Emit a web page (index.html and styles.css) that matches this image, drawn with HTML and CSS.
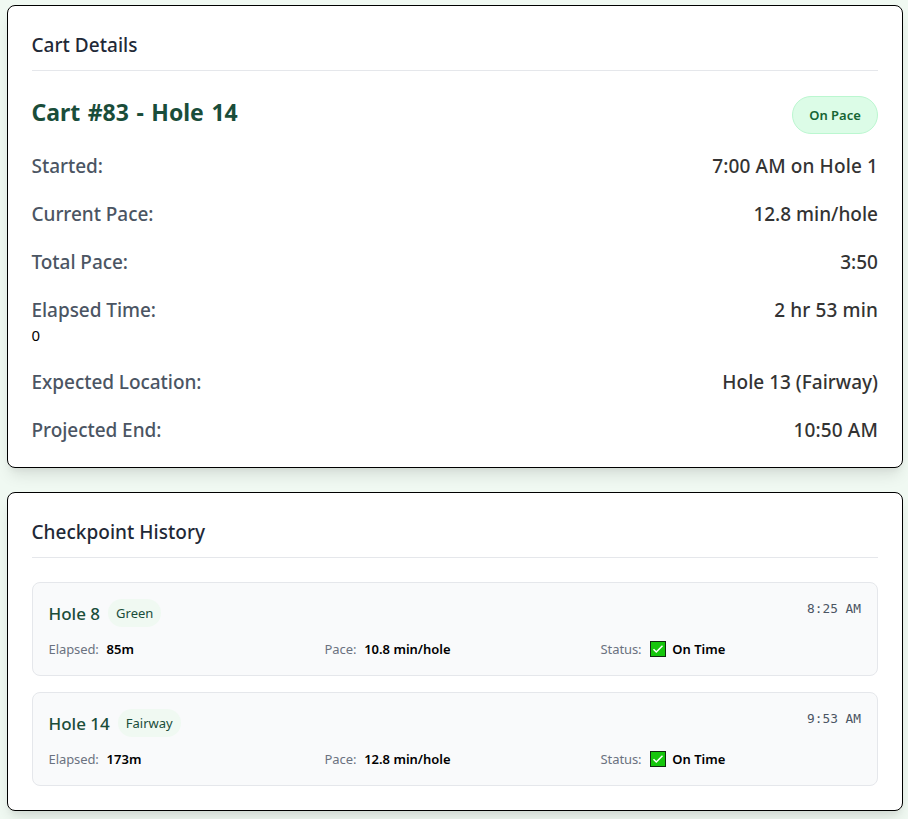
FILE: index.html
```html
<!DOCTYPE html>
<html lang="en">
<head>
<meta charset="utf-8">
<title>Cart Details</title>
<link rel="stylesheet" href="styles.css">
</head>
<body>
<main class="page">
  <section class="card card-details">
    <h2 class="card-title">Cart Details</h2>
    <div class="cart-head">
      <h3 class="cart-name">Cart #83 - Hole 14</h3>
      <span class="badge">On Pace</span>
    </div>
    <div class="details">
      <div class="row"><span class="label">Started:</span><span class="value wide">7:00 AM on Hole 1</span></div>
      <div class="row"><span class="label">Current Pace:</span><span class="value">12.8 min/hole</span></div>
      <div class="row"><span class="label">Total Pace:</span><span class="value">3:50</span></div>
      <div>
        <div class="row"><span class="label">Elapsed Time:</span><span class="value wide">2 hr 53 min</span></div>
        <div class="extra">0</div>
      </div>
      <div class="row"><span class="label">Expected Location:</span><span class="value">Hole 13 (Fairway)</span></div>
      <div class="row"><span class="label">Projected End:</span><span class="value wide">10:50 AM</span></div>
    </div>
  </section>

  <section class="card">
    <h2 class="card-title">Checkpoint History</h2>
    <div class="history">
      <article class="checkpoint">
        <div class="cp-head">
          <div class="cp-place"><span class="cp-hole">Hole 8</span><span class="pill">Green</span></div>
          <time class="cp-time">8:25 AM</time>
        </div>
        <div class="stats">
          <div class="stat"><span class="stat-label">Elapsed:</span><span class="stat-value">85m</span></div>
          <div class="stat"><span class="stat-label">Pace:</span><span class="stat-value">10.8 min/hole</span></div>
          <div class="stat"><span class="stat-label">Status:</span><svg class="check" viewBox="0 0 16 16"><rect x=".5" y=".5" width="15" height="15" fill="#16c60c" stroke="#102a10"/><path d="M3.5 8.2 6.3 11l6.2-6.2" fill="none" stroke="#fff" stroke-width="1.5"/></svg><span class="stat-value">On Time</span></div>
        </div>
      </article>
      <article class="checkpoint">
        <div class="cp-head">
          <div class="cp-place"><span class="cp-hole">Hole 14</span><span class="pill">Fairway</span></div>
          <time class="cp-time">9:53 AM</time>
        </div>
        <div class="stats">
          <div class="stat"><span class="stat-label">Elapsed:</span><span class="stat-value">173m</span></div>
          <div class="stat"><span class="stat-label">Pace:</span><span class="stat-value">12.8 min/hole</span></div>
          <div class="stat"><span class="stat-label">Status:</span><svg class="check" viewBox="0 0 16 16"><rect x=".5" y=".5" width="15" height="15" fill="#16c60c" stroke="#102a10"/><path d="M3.5 8.2 6.3 11l6.2-6.2" fill="none" stroke="#fff" stroke-width="1.5"/></svg><span class="stat-value">On Time</span></div>
        </div>
      </article>
    </div>
  </section>
</main>
</body>
</html>
```
FILE: styles.css
```css
* { box-sizing: border-box; margin: 0; padding: 0; }

body {
  background: #f0f9f2;
  color: #000;
  font-family: "Noto Sans", "Open Sans", sans-serif;
  overflow: hidden;
}

.page {
  display: flex;
  flex-direction: column;
  gap: 24px;
  padding: 5px 5px 8px 7px;
}

.card {
  padding: 24px;
  background: #fff;
  border: 1px solid #000;
  border-radius: 8px;
  box-shadow: 0 10px 15px -3px rgba(0, 0, 0, .1), 0 4px 6px -2px rgba(0, 0, 0, .05);
}

.card-details { padding-bottom: 23px; }

.card-title {
  height: 41px;
  margin-bottom: 24px;
  border-bottom: 1px solid #e5e7eb;
  color: #1f2937;
  font-size: 19px;
  font-weight: 500;
  line-height: 31px;
  letter-spacing: .03px;
  text-indent: -.5px;
}

.cart-head {
  display: flex;
  justify-content: space-between;
  align-items: flex-start;
  height: 41px;
  margin-bottom: 16px;
}

.cart-name {
  color: #1a4d3a;
  font-size: 23px;
  font-weight: 700;
  letter-spacing: -.02px;
  line-height: 35px;
  text-indent: -.5px;
  word-spacing: 1.6px;
}

.badge {
  width: 86px;
  height: 38px;
  margin-top: 1px;
  border: 1px solid #bbf7d0;
  border-radius: 19px;
  background: #dcfce7;
  color: #166534;
  font-size: 13px;
  font-weight: 600;
  line-height: 36px;
  text-align: center;
}

.details { display: flex; flex-direction: column; gap: 20px; }

.row {
  display: flex;
  justify-content: space-between;
  font-size: 19px;
  font-weight: 500;
  line-height: 28px;
}

.label { color: #4b5563; letter-spacing: -.05px; text-indent: -.5px; }
.value { color: #333; }
.wide { letter-spacing: .12px; }
.extra { height: 24px; font-size: 15px; line-height: 22px; text-indent: -.5px; }

.history { display: flex; flex-direction: column; gap: 16px; }

.checkpoint {
  padding: 16px;
  border: 1px solid #e5e7eb;
  border-radius: 8px;
  background: #f9fafb;
}

.cp-head {
  display: flex;
  justify-content: space-between;
  align-items: flex-start;
  margin-bottom: 12px;
}

.cp-place { display: flex; align-items: center; gap: 8px; }

.cp-hole {
  color: #1a4d3a;
  font-size: 17px;
  font-weight: 550;
  line-height: 29px;
  height: 28px;
  text-indent: -.5px;
}

.pill {
  padding: 0 8px;
  border-radius: 14px;
  background: #f0f9f2;
  color: #1a4d3a;
  font-size: 13px;
  line-height: 28px;
}

.cp-time {
  color: #4b5563;
  font-family: "DejaVu Sans Mono", "Liberation Mono", monospace;
  font-size: 12.8px;
  line-height: 20px;
}

.stats {
  display: grid;
  grid-template-columns: repeat(3, 1fr);
  gap: 16px;
  font-size: 13px;
  line-height: 20px;
}

.stat { display: flex; align-items: center; }
.stat-label { margin-right: 7.8px; color: #6b7280; letter-spacing: -.08px; text-indent: -.5px; }
.stat-value { font-weight: 600; }
.check { width: 16px; height: 16px; margin: 0 6px 0 1px; }
```
